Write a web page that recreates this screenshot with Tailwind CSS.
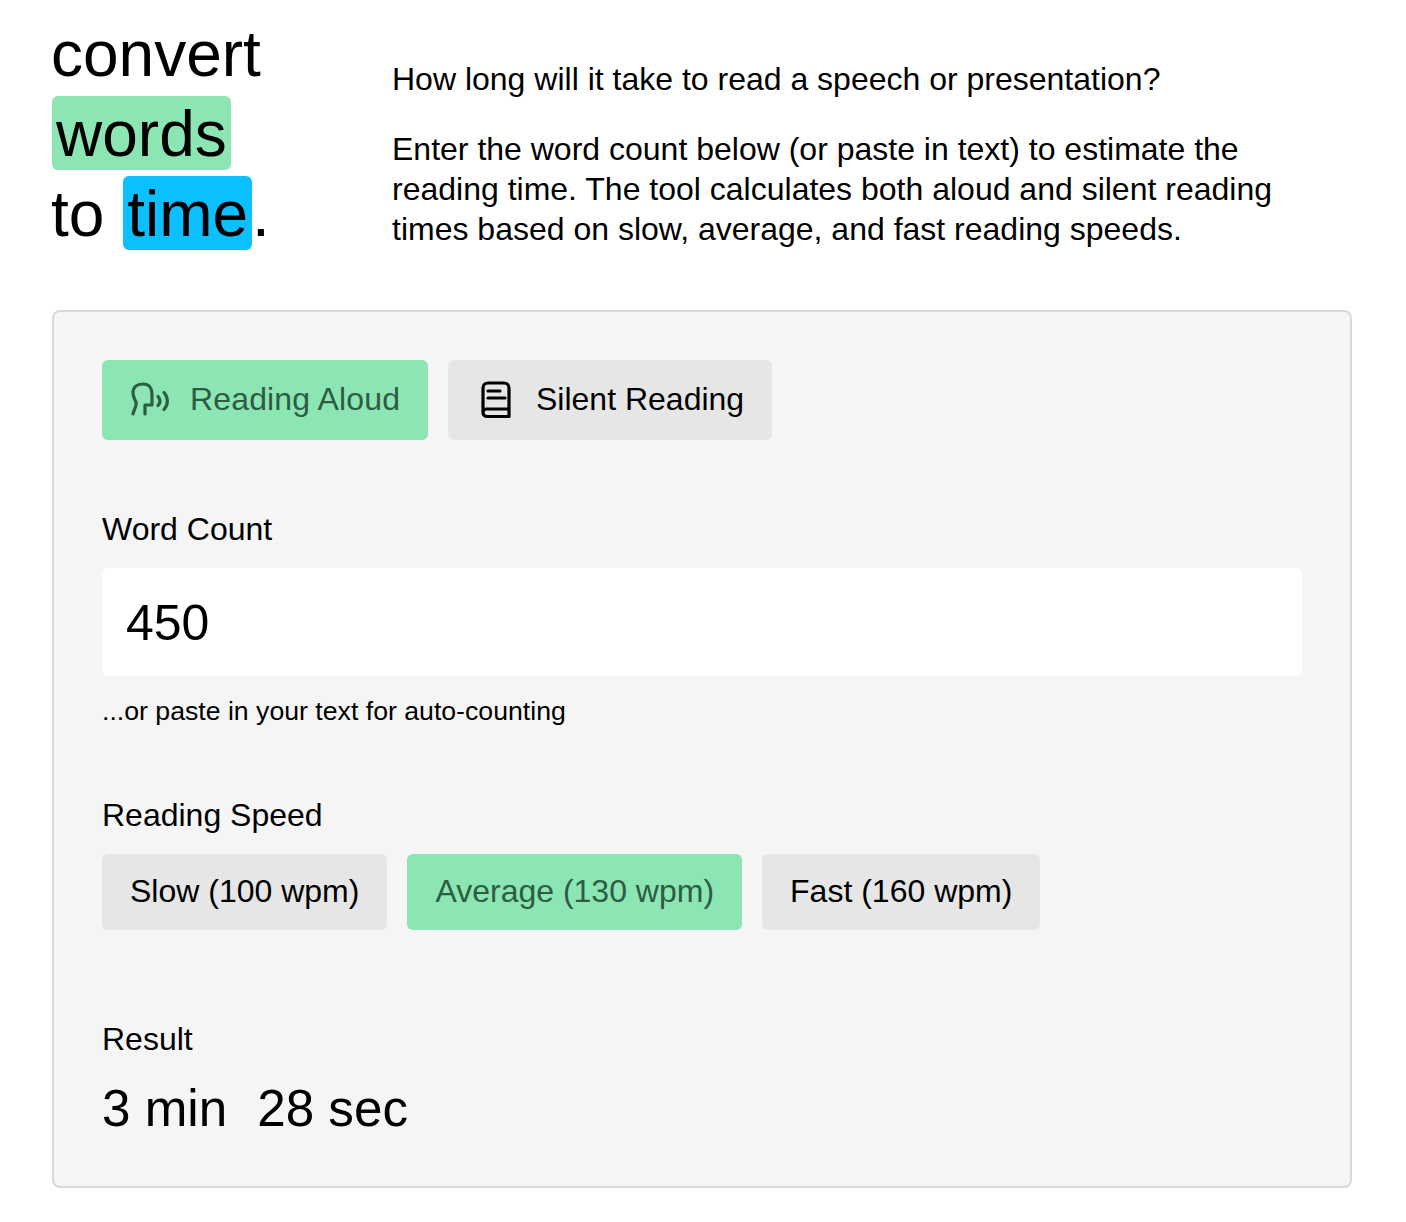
<!doctype html>
<html><head><meta charset="utf-8"><script src="https://cdn.jsdelivr.net/npm/@tailwindcss/browser@4"></script></head>
<body class="bg-white text-black font-['Liberation_Sans',Arial,sans-serif]">
<div class="w-[1406px] h-[1222px] px-[52px] pt-[14px]">
  <header class="flex items-start h-[296px]">
    <h1 class="w-[341px] shrink-0 text-[64px] leading-[80px] font-normal -ml-[1px]">convert<br><span class="bg-[#8ce6b3] rounded-[6px] px-[4px] pt-[2px] ml-[1px]">words</span><br>to <span class="bg-[#0cbfff] rounded-[6px] px-[4px] pt-[2px] ml-[1px]">time</span>.</h1>
    <div class="pt-[45px] w-[900px] text-[32px] leading-[40px]">
      <p class="mb-[30px]">How long will it take to read a speech or presentation?</p>
      <p>Enter the word count below (or paste in text) to estimate the reading time. The tool calculates both aloud and silent reading times based on slow, average, and fast reading speeds.</p>
    </div>
  </header>
  <main class="w-[1300px] h-[878px] bg-[#f5f5f5] border-2 border-[#d9d9d9] rounded-[8px] px-[48px] pt-[48px]">
    <div class="flex gap-[20px]">
      <button class="h-[80px] w-[326px] bg-[#8ce6b3] rounded-[6px] flex items-center pl-[28px] gap-[20px] text-[32px] text-[#2d5c42]">
        <svg class="w-[40px] h-[40px]" viewBox="0 0 40 40" fill="none" stroke="currentColor" stroke-width="3.200" stroke-linecap="round" stroke-linejoin="round"><path d="M3 34C4 29 7 26 6 22C4 18 3 16 3 13C3 7 7 4 13 4C19 4 22 8 22 14V25H15V34"/><path d="M28 16.500q4 4.500 0 9"/><path d="M34 12.500c4.500 5 4.500 12 0 17"/></svg>
        <span class="mb-[2px] tracking-[0.15px]">Reading Aloud</span>
      </button>
      <button class="h-[80px] w-[324px] bg-[#e6e6e6] rounded-[6px] flex items-center pl-[28px] gap-[20px] text-[32px]">
        <svg class="w-[40px] h-[40px]" viewBox="0 0 40 40" fill="none" stroke="currentColor" stroke-width="3.200" stroke-linecap="round" stroke-linejoin="round"><path d="M7 33V8a5 5 0 0 1 5-5h16a5 5 0 0 1 5 5V36.500H11a4 4 0 0 1-4-4a3.500 3.500 0 0 1 3.500-3.500H33"/><path d="M12 11h12M12 18h17"/></svg>
        <span class="mb-[2px]">Silent Reading</span>
      </button>
    </div>
    <label class="block mt-[69px] text-[32px] leading-[40px]">Word Count</label>
    <div class="mt-[19px] h-[108px] bg-white rounded-[6px] flex items-center px-[24px] pt-[2px] text-[50px]">450</div>
    <p class="mt-[17px] text-[26.67px] leading-[36px]">...or paste in your text for auto-counting</p>
    <label class="block mt-[66px] text-[32px] leading-[40px]">Reading Speed</label>
    <div class="flex gap-[20px] mt-[19px]">
      <button class="h-[76px] px-[28px] pb-[2px] bg-[#e6e6e6] rounded-[6px] text-[32px]">Slow (100 wpm)</button>
      <button class="h-[76px] px-[28px] pb-[2px] bg-[#8ce6b3] rounded-[6px] text-[32px] text-[#2d5c42]">Average (130 wpm)</button>
      <button class="h-[76px] px-[28px] pb-[2px] bg-[#e6e6e6] rounded-[6px] text-[32px]">Fast (160 wpm)</button>
    </div>
    <label class="block mt-[89px] text-[32px] leading-[40px]">Result</label>
    <div class="mt-[20px] flex gap-[30px] text-[51.2px] leading-[60px]"><span>3 min</span><span>28 sec</span></div>
  </main>
</div>
</body></html>
